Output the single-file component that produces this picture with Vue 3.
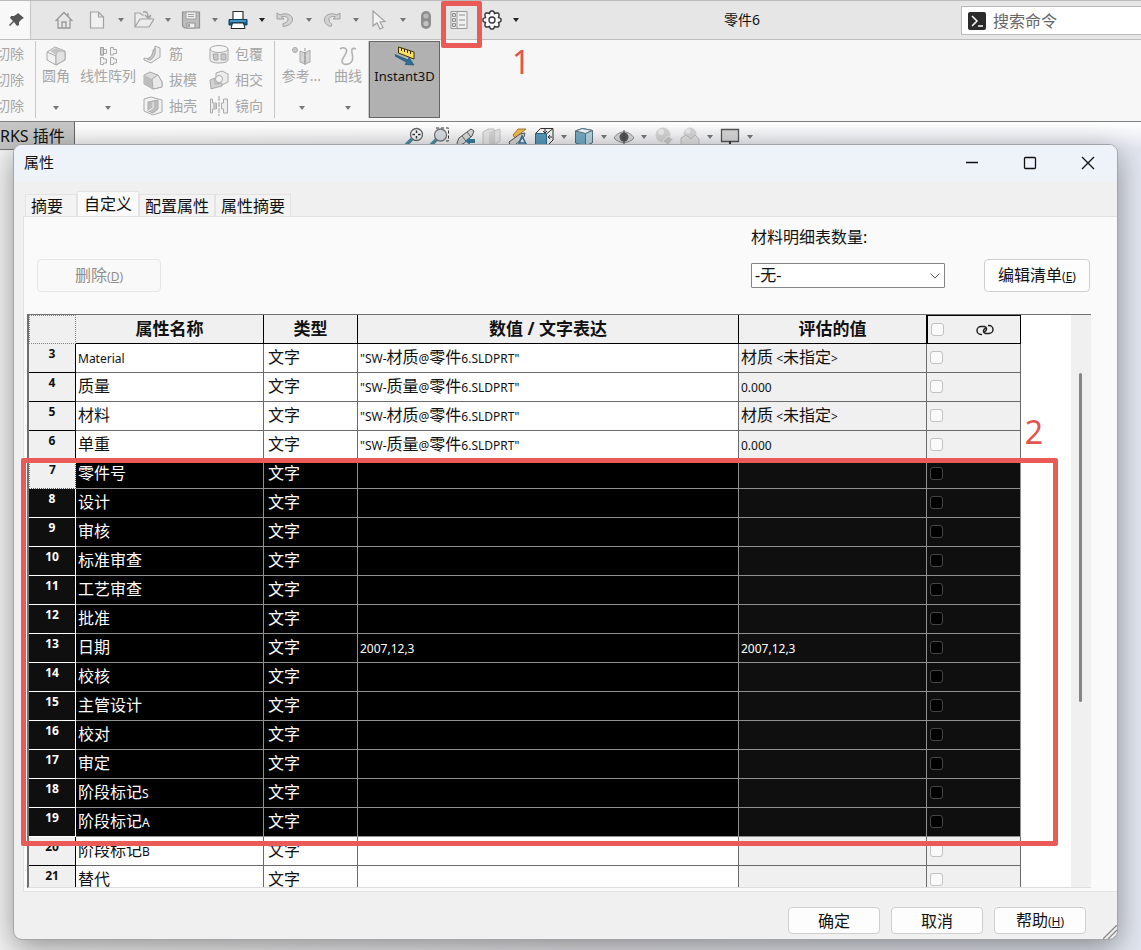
<script setup>
import { ref } from 'vue'

const quickTools = [
  { id: 'new', label: '新建' },
  { id: 'open', label: '打开' },
  { id: 'save', label: '保存' },
  { id: 'print', label: '打印', enabled: true },
  { id: 'undo', label: '撤销' },
  { id: 'redo', label: '重做' },
  { id: 'cursor', label: '选择' },
]

const featureColumns = [
  [
    { id: 'rib', label: '筋' },
    { id: 'draft', label: '拔模' },
    { id: 'shell', label: '抽壳' },
  ],
  [
    { id: 'wrap', label: '包覆' },
    { id: 'intersect', label: '相交' },
    { id: 'mirror', label: '镜向' },
  ],
]

const viewTools = [
  { id: 'zoom-fit', label: '整屏显示全图' },
  { id: 'zoom-area', label: '局部放大' },
  { id: 'prev-view', label: '上一视图' },
  { id: 'section', label: '剖面视图' },
  { id: 'annot', label: '动态注解视图' },
  { id: 'orient', label: '视图定向', menu: true },
  { id: 'display', label: '显示样式', menu: true },
  { id: 'eye', label: '隐藏/显示项目', menu: true },
  { id: 'appearance', label: '编辑外观' },
  { id: 'scene', label: '应用布景', menu: true },
  { id: 'monitor', label: '视图设定', menu: true },
]

const tabs = ['摘要', '自定义', '配置属性', '属性摘要']
const activeTab = ref('自定义')
const bomQuantity = ref('-无-')

const rows = ref([
  { no: 3, name: 'Material', value: '"SW-材质@零件6.SLDPRT"', result: '材质 <未指定>' },
  { no: 4, name: '质量', value: '"SW-质量@零件6.SLDPRT"', result: '0.000' },
  { no: 5, name: '材料', value: '"SW-材质@零件6.SLDPRT"', result: '材质 <未指定>' },
  { no: 6, name: '单重', value: '"SW-质量@零件6.SLDPRT"', result: '0.000' },
  { no: 7, name: '零件号' },
  { no: 8, name: '设计' },
  { no: 9, name: '审核' },
  { no: 10, name: '标准审查' },
  { no: 11, name: '工艺审查' },
  { no: 12, name: '批准' },
  { no: 13, name: '日期', value: '2007,12,3', result: '2007,12,3' },
  { no: 14, name: '校核' },
  { no: 15, name: '主管设计' },
  { no: 16, name: '校对' },
  { no: 17, name: '审定' },
  { no: 18, name: '阶段标记S' },
  { no: 19, name: '阶段标记A' },
  { no: 20, name: '阶段标记B' },
  { no: 21, name: '替代' },
])

const linked = ref([])

function isSelected(row) {
  return row.no >= 7 && row.no <= 19
}

// Latin runs are set smaller than the Chinese text around them
function parts(text) {
  if (!text) return []
  return text
    .split(/([\x20-\x7e]+)/)
    .filter(Boolean)
    .map((t) => ({ t, latin: /^[\x20-\x7e]/.test(t) }))
}
</script>

<template>
<svg class="sprite" aria-hidden="true">
  <symbol id="i-pin" viewBox="0 0 20 20"><path d="M11 3l6 5-2 1-3 3 0 3-2 1-3-4-4 4-1-1 4-4-3-3 1-2h3l3-2z" fill="#555" /></symbol>
  <symbol id="i-home" viewBox="0 0 20 20"><path d="M1.500 11L10 2.500l8.500 8.500M4 9.500V18h12V9.500M8 18v-6h4v6M14 3v3" fill="none" stroke="#999" stroke-width="1.300" /></symbol>
  <symbol id="i-new" viewBox="0 0 20 20"><path d="M3.500 2h8l5 5v11h-13zM11.500 2v5h5" fill="#f1f1f1" stroke="#a2a2a2" stroke-width="1.200" /></symbol>
  <symbol id="i-open" viewBox="0 0 20 20"><path d="M1 17V3h5l2 2h2M1 17L6 9h14l-5 8zM16 9V6" fill="#ececec" stroke="#a2a2a2" stroke-width="1.200" /><path d="M9 2c4-1 5 1 5 5m-3-2l3 3 3-3" fill="none" stroke="#a2a2a2" stroke-width="1.400" /></symbol>
  <symbol id="i-save" viewBox="0 0 20 20"><path d="M1.500 2h17v16h-15l-2-2z" fill="#bdbdbd" stroke="#929292" stroke-width="1.200" /><path d="M5 2h10v7H5z" fill="#f0f0f0" stroke="#a0a0a0" /><path d="M7 4.500h6M7 6.500h6" stroke="#a0a0a0" /><path d="M6 13h8v5H6z" fill="#eee" stroke="#929292" /><path d="M8 14v3" stroke="#888" stroke-width="1.500" /></symbol>
  <symbol id="i-print" viewBox="0 0 20 20"><path d="M5 9V1.500h10V9" fill="#fff" stroke="#333" stroke-width="1.200" /><path d="M1 9.500h18V15H1z" fill="#12608f" stroke="#083e62" /><path d="M2 11h16" stroke="#5ba6d0" stroke-width="1.500" /><path d="M4.500 13h11l1.500 5.500H3z" fill="#fff" stroke="#222" /></symbol>
  <symbol id="i-undo" viewBox="0 0 20 20"><path d="M2 3v6h7L6.500 7c4-1.500 7 .5 6.500 3-.5 2-2.500 3-5 3.500v3c5-.5 9-2.500 9.500-6.500C18 5 11 2 5 5z" fill="#d2d2d2" stroke="#a0a0a0" /></symbol>
  <symbol id="i-redo" viewBox="0 0 20 20"><path d="M18 3v6h-7l2.500-2c-4-1.500-7 .5-6.500 3 .5 2 1 3 3 4.500l-1 2C5 15.500 2.500 13.500 2.500 10 2 5 9 2 15 5z" fill="#d2d2d2" stroke="#a0a0a0" /></symbol>
  <symbol id="i-cursor" viewBox="0 0 20 20"><path d="M4 1v15l4-3 3 6 3-1.500-3-5.500 5-.5z" fill="#f3f3f3" stroke="#a0a0a0" stroke-width="1.200" /></symbol>
  <symbol id="i-traffic" viewBox="0 0 20 20"><rect x="5" y="1" width="10" height="18" rx="5" fill="#8f8f8f" /><circle cx="10" cy="6" r="2.600" fill="#b8b8b8" /><circle cx="10" cy="13.500" r="2.600" fill="#c4c4c4" /></symbol>
  <symbol id="i-props" viewBox="0 0 20 20"><path d="M2 1.500h16v17H2zM8 1.500v17" fill="#f0f0f0" stroke="#999" /><path d="M3.500 3.500h3v3h-3zM3.500 8.500h3v3h-3zM3.500 13.500h3v3h-3zM10 5h6M10 10h6M10 15h6" fill="#ddd" stroke="#8f8f8f" /></symbol>
  <symbol id="i-gear" viewBox="0 0 20 20"><path d="M8 2l1-1h2l1 1 .5 1.500L14 3h2l1 1v2l-.5 1.500L18 8l1 1v2l-1 1-1.500.5L17 14v2l-1 1h-2l-1.500-.5L12 18l-1 1H9l-1-1-.5-1.500L6 17H4l-1-1v-2l.5-1.500L2 12l-1-1V9l1-1 1.500-.5L3 6V4l1-1h2l1.500.5z" fill="#f8f8f8" stroke="#333" stroke-width="1.400" /><circle cx="10" cy="10" r="3" fill="#fff" stroke="#333" stroke-width="1.300" /></symbol>
  <symbol id="i-fillet" viewBox="0 0 20 20"><path d="M1 6l8-5 10 4v9l-9 5-9-5z" fill="#f2f2f2" stroke="#aaa" /><path d="M1 6l9 4v9" fill="none" stroke="#aaa" /><path d="M10 10c0-4 4-7 9-4v8l-9 5z" fill="#e2e2e2" stroke="#aaa" /><path d="M4 5l6-3 8 3c-5-1-7 1-8 4z" fill="#c4c4c4" /></symbol>
  <symbol id="i-pattern" viewBox="0 0 20 20"><path d="M2.500 1.500h3V3.500h3v4h-3v1.500h-3zM12.500 1.500h3V3.500h3v4h-3v1.500h-3zM2.500 11.500h3v1.500h3v4h-3v1.500h-3zM12.500 11.500h3v1.500h3v4h-3v1.500h-3z" fill="#f2f2f2" stroke="#a8a8a8" /><path d="M2.500 1.500h3v7.500h-3z" fill="#d0d0d0" stroke="#a0a0a0" /></symbol>
  <symbol id="i-rib" viewBox="0 0 20 20"><path d="M12 2l5 2v9l-9 6-7-3v-2l6 1c4-3 5-7 5-13z" fill="#ececec" stroke="#aaa" /><path d="M12 4c1 6-1 10-5 12l-3-1c4-2 6-5 6-9z" fill="#c5c5c5" stroke="#aaa" /></symbol>
  <symbol id="i-draft" viewBox="0 0 20 20"><path d="M1 5l6-3 8 3 4 7v5l-9 2-9-5z" fill="#dcdcdc" stroke="#aaa" /><path d="M1 5l8 4v9l-8-4z" fill="#bdbdbd" /><path d="M9 9l6-4 4 7v5l-9 2z" fill="#e9e9e9" stroke="#aaa" /></symbol>
  <symbol id="i-shell" viewBox="0 0 20 20"><path d="M1 3l7-2 11 3v12l-9 3-9-4z" fill="#f2f2f2" stroke="#aaa" /><path d="M5 6l10-2v9l-5 4-5-2z" fill="#bebebe" stroke="#aaa" /><path d="M5 15l5-3V6" fill="none" stroke="#eee" /></symbol>
  <symbol id="i-wrap" viewBox="0 0 20 20"><path d="M1 5v11c0 4 18 4 18 0V5" fill="#ededed" stroke="#aaa" /><ellipse cx="10" cy="5" rx="9" ry="3.500" fill="#f6f6f6" stroke="#aaa" /><path d="M4 10h5v6H5zM12 10h5v6h-5z" fill="#c9c9c9" stroke="#a5a5a5" /></symbol>
  <symbol id="i-intersect" viewBox="0 0 20 20"><path d="M7 3l6-2 6 3v8l-6 3-6-3z" fill="#ececec" stroke="#aaa" /><path d="M1 10l5-2v6l7-1v3l-8 2-3 1z" fill="#d2d2d2" stroke="#aaa" /><circle cx="10" cy="9" r="3.500" fill="#f4f4f4" stroke="#aaa" /></symbol>
  <symbol id="i-mirror" viewBox="0 0 20 20"><path d="M10 0v20" stroke="#999" stroke-dasharray="5 1" /><path d="M1.500 3h2v4h4v6h-4v4h-2zM18.500 3h-4v4h-2v6h2v4h4z" fill="#eee" stroke="#aaa" /><path d="M4 7.500l3-.5v6H4z" fill="#c5c5c5" /></symbol>
  <symbol id="i-ref" viewBox="0 0 20 20"><circle cx="3" cy="4" r="2.500" fill="#ccc" stroke="#aaa" /><path d="M8 5l5 2v11l-5-2zM13 7l5-3v12l-5 2z" fill="#d6d6d6" stroke="#aaa" /><path d="M13 2v17" stroke="#999" stroke-dasharray="3 1" /></symbol>
  <symbol id="i-curve" viewBox="0 0 20 20"><path d="M2 3c4-3 8 0 6 4-1 3-4 5-4 8 0 5 8 4 10 0 2-5-1-8 0-11 0-2 2-2 4-1" fill="none" stroke="#b2b2b2" stroke-width="1.600" /></symbol>
  <symbol id="i-instant" viewBox="0 0 20 20"><path d="M3.500 1l15.500 5v7L3.500 7z" fill="#ffe066" stroke="#3d3200" /><path d="M6.500 2v3M9.500 3v3M12.500 4v3M15.500 5v3" stroke="#332900" /><path d="M0 8.500l13 5.500 1-2.500 5 7.500-9-.5 1.500-2.200L0 10z" fill="#2d6d97" stroke="#174a6c" stroke-width=".6" /></symbol>
  <symbol id="i-zoom-fit" viewBox="0 0 20 20"><path d="M2 18l6-6" stroke="#4e89a8" stroke-width="3.500" /><circle cx="12.500" cy="7.500" r="6" fill="#f2f5f7" stroke="#666" stroke-width="1.300" /><path d="M12.500 3.500v2.500M12.500 9v2.500M8.500 7.500H11M14 7.500h2.500" stroke="#333" stroke-width="1.500" /></symbol>
  <symbol id="i-zoom-area" viewBox="0 0 20 20"><path d="M6 1h12.500v13H14" fill="none" stroke="#333" stroke-dasharray="3 2" /><path d="M1 18l6-6" stroke="#4e89a8" stroke-width="3.500" /><circle cx="10.500" cy="8" r="6" fill="#d5dde2" stroke="#777" stroke-width="1.300" /></symbol>
  <symbol id="i-prev-view" viewBox="0 0 20 20"><path d="M1 16l2-5L15 2l3 2-2 5-9 8-5 1z" fill="#d8d8d8" stroke="#555" /><path d="M6 9l4 5M11 5l4 5" stroke="#666" /><path d="M19 12v4h-5v2l-5-4 5-4v2z" fill="#357d9f" /></symbol>
  <symbol id="i-section" viewBox="0 0 20 20"><path d="M1 5l5-3h6v14l-5 2H1zM12 4l6-2v12l-6 4z" fill="#e4e4e4" stroke="#c2c2c2" /><path d="M7 6l5-3v13l-5 2z" fill="#d2d2d2" /></symbol>
  <symbol id="i-annot" viewBox="0 0 20 20"><path d="M5 8l5-6h8l-5 4 3 1-9 4z" fill="#f2b84b" stroke="#8c641f" stroke-width=".8" /><path d="M1 15l11-8 5-1-1 4-9 8H2z" fill="#d3d3d3" stroke="#555" /><path d="M10 19l4-10 5 10M12 16h5" fill="none" stroke="#34769b" stroke-width="1.600" /></symbol>
  <symbol id="i-orient" viewBox="0 0 20 20"><path d="M1.500 6.500l5-5H19V13l-6 6" fill="#f4f4f4" stroke="#333" /><path d="M19 1.500l-6 5" stroke="#333" /><path d="M1.500 6.500h11V19h-11z" fill="#5699b7" stroke="#2b6784" /><path d="M11 2v4M9 4l2 2 2-2M18 10h-4M16 8l-2 2 2 2" fill="none" stroke="#333" /></symbol>
  <symbol id="i-display" viewBox="0 0 20 20"><path d="M1.500 4l7-2.500 10 2v12l-7 3.500-10-3z" fill="#73aac2" stroke="#3f6e83" /><path d="M1.500 4l10 2.500 7-3-10-2z" fill="#edf3f5" stroke="#55727d" /><path d="M11.500 6.500l7-3v12l-7 3.500z" fill="#b7d1dc" stroke="#55727d" /></symbol>
  <symbol id="i-eye" viewBox="0 0 20 20"><path d="M0 11c5-8 15-8 20 0-5 6-15 6-20 0z" fill="#d3d7d9" stroke="#888" /><circle cx="10" cy="10" r="4.500" fill="#555" /><path d="M10 3v15" stroke="#444" /></symbol>
  <symbol id="i-appearance" viewBox="0 0 20 20"><circle cx="9" cy="8" r="7.500" fill="#d3d3d3" /><circle cx="7" cy="5" r="3" fill="#e9e9e9" /><path d="M9 14l5-5 5 3-5 6z" fill="#c5c5c5" stroke="#e9e9e9" /></symbol>
  <symbol id="i-scene" viewBox="0 0 20 20"><circle cx="10" cy="7" r="6.500" fill="#d3d3d3" /><path d="M1 11l5-3 5 4 4-4 4 4v7H1z" fill="#dedede" stroke="#bbb" /><circle cx="8" cy="4" r="2.500" fill="#eaeaea" /></symbol>
  <symbol id="i-monitor" viewBox="0 0 20 20"><path d="M1.500 2.500h17v12h-17z" fill="#d5d5d5" stroke="#555" stroke-width="1.300" /><path d="M10 14v4M6 18.500h8" stroke="#333" stroke-width="2" /></symbol>
</svg>

<div class="app">
  <header class="quickbar">
    <button class="pin" aria-label="固定"><svg class="icon"><use href="#i-pin" /></svg></button>
    <div class="tools">
      <button class="tool" aria-label="主页"><svg class="icon"><use href="#i-home" /></svg></button>
      <div class="tool-groups">
        <div v-for="tool in quickTools" :key="tool.id" class="tool-group">
          <button class="tool" :aria-label="tool.label"><svg class="icon"><use :href="'#i-' + tool.id" /></svg></button>
          <button class="caret" :class="{ dark: tool.enabled }" :aria-label="tool.label + '选项'"></button>
        </div>
        <button class="tool" aria-label="重建模型"><svg class="icon"><use href="#i-traffic" /></svg></button>
      </div>
      <div class="marked">
        <button class="tool" aria-label="文件属性"><svg class="icon"><use href="#i-props" /></svg></button>
        <span class="mark mark-tool"></span>
        <span class="mark-no mark-no-tool">1</span>
      </div>
      <div class="tool-group">
        <button class="tool" aria-label="选项"><svg class="icon"><use href="#i-gear" /></svg></button>
        <button class="caret dark" aria-label="更多选项"></button>
      </div>
    </div>
    <h1 class="doc-title">零件6</h1>
    <label class="search">
      <svg class="search-icon" viewBox="0 0 18 18"><rect width="18" height="18" rx="2" fill="#2b2b2b" /><path d="M4 4l5 5-5 5M10 14h5" fill="none" stroke="#fff" stroke-width="1.500" /></svg>
      <input type="text" placeholder="搜索命令" aria-label="搜索命令">
    </label>
  </header>

  <nav class="ribbon">
    <div class="cut-list">
      <button v-for="n in 3" :key="n" class="feature">切除</button>
    </div>
    <button class="big big-s"><svg class="icon"><use href="#i-fillet" /></svg><span>圆角</span><i class="arrow"></i></button>
    <button class="big big-l"><svg class="icon"><use href="#i-pattern" /></svg><span>线性阵列</span><i class="arrow"></i></button>
    <div v-for="(col, i) in featureColumns" :key="i" class="feature-col">
      <button v-for="f in col" :key="f.id" class="feature"><svg class="icon"><use :href="'#i-' + f.id" /></svg>{{ f.label }}</button>
    </div>
    <div class="ribbon-group">
      <button class="big big-m"><svg class="icon"><use href="#i-ref" /></svg><span>参考...</span><i class="arrow"></i></button>
      <button class="big big-s"><svg class="icon"><use href="#i-curve" /></svg><span>曲线</span><i class="arrow"></i></button>
    </div>
    <button class="big instant"><svg class="icon"><use href="#i-instant" /></svg><span>Instant3D</span></button>
  </nav>

  <div class="viewbar">
    <button class="addin-tab">RKS 插件</button>
    <div class="view-tools">
      <template v-for="v in viewTools" :key="v.id">
        <button class="view-tool" :aria-label="v.label"><svg class="icon"><use :href="'#i-' + v.id" /></svg></button>
        <button v-if="v.menu" class="caret view-caret" :aria-label="v.label + '选项'"></button>
      </template>
    </div>
  </div>

  <section class="dialog" role="dialog" aria-labelledby="dlg-title">
    <div class="titlebar">
      <h2 id="dlg-title">属性</h2>
      <div class="win-buttons">
        <button aria-label="最小化"><svg viewBox="0 0 14 14"><path d="M1 6.500h12" /></svg></button>
        <button aria-label="最大化"><svg viewBox="0 0 14 14"><rect x="1.500" y="1.500" width="11" height="11" rx="1" /></svg></button>
        <button aria-label="关闭"><svg viewBox="0 0 14 14"><path d="M1 1l12 12M13 1L1 13" /></svg></button>
      </div>
    </div>

    <div class="tabs" role="tablist">
      <button
        v-for="tab in tabs" :key="tab" role="tab" class="tab"
        :class="{ active: tab === activeTab }" :aria-selected="tab === activeTab"
        @click="activeTab = tab"
      >{{ tab }}</button>
    </div>

    <div class="panel">
      <div class="controls">
        <button class="btn btn-delete" disabled>删除<small>(<u>D</u>)</small></button>
        <div class="field">
          <label for="bom">材料明细表数量:</label>
          <div class="select-box">
            <select id="bom" v-model="bomQuantity">
              <option>-无-</option>
            </select>
            <svg class="chevron" viewBox="0 0 10 6"><path d="M.5 .5L5 5 9.500 .5" fill="none" stroke="#555" /></svg>
          </div>
        </div>
        <button class="btn btn-edit">编辑清单<small>(<u>E</u>)</small></button>
      </div>

      <div class="grid">
        <div class="grid-view">
          <table>
            <colgroup>
              <col class="c-no"><col class="c-name"><col class="c-type"><col><col class="c-name"><col class="c-type">
            </colgroup>
            <thead>
              <tr>
                <th class="corner"></th>
                <th>属性名称</th>
                <th>类型</th>
                <th>数值 / 文字表达</th>
                <th>评估的值</th>
                <th class="link-head">
                  <div class="link-cell">
                    <input type="checkbox" aria-label="全部链接">
                    <svg class="link-icon" viewBox="0 0 18 12"><path d="M6 10.500H5a4 4 0 0 1 0-8h3.500a2.500 2.500 0 0 1 1.500 4L8.500 8M12 1.500h1a4 4 0 0 1 0 8H9.500a2.500 2.500 0 0 1-1.500-4L9.500 4" fill="none" stroke="#222" stroke-width="1.500" /></svg>
                  </div>
                </th>
              </tr>
            </thead>
            <tbody>
              <tr v-for="row in rows" :key="row.no" :class="{ selected: isSelected(row), current: row.no === 7 }">
                <th scope="row">{{ row.no }}</th>
                <td><span v-for="(p, i) in parts(row.name)" :key="i" :class="{ latin: p.latin }">{{ p.t }}</span></td>
                <td class="type">文字</td>
                <td><span v-for="(p, i) in parts(row.value)" :key="i" :class="{ latin: p.latin }">{{ p.t }}</span></td>
                <td class="readonly"><span v-for="(p, i) in parts(row.result)" :key="i" :class="{ latin: p.latin }">{{ p.t }}</span></td>
                <td class="readonly">
                  <div class="link-cell"><input v-model="linked" type="checkbox" :value="row.no" :aria-label="'链接 ' + row.name"></div>
                </td>
              </tr>
            </tbody>
          </table>
          <div class="scrollbar"><div class="thumb"></div></div>
        </div>
        <div class="mark mark-rows"><span class="mark-no mark-no-rows">2</span></div>
      </div>
    </div>

    <footer class="actions">
      <button class="btn">确定</button>
      <button class="btn">取消</button>
      <button class="btn">帮助<small>(<u>H</u>)</small></button>
      <svg class="grip" viewBox="0 0 14 14"><path d="M0 14L14 0M5 14l9-9M10 14l4-4" stroke="#888" stroke-width="1.300" /></svg>
    </footer>
  </section>
</div>
</template>

<style>
body {
  margin: 0;
  overflow: hidden;
}
</style>

<style scoped>
.app {
  position: relative;
  height: 100vh;
  overflow: hidden;
  background: linear-gradient(90deg, #f4f4f4, #e6e6ea 50%, #e2e6f0);
  font-family: "Noto Sans", "Noto Sans CJK SC", sans-serif;
  font-size: 16px;
  color: #111;
}

.app *,
.app *::before {
  box-sizing: border-box;
}

.sprite {
  position: absolute;
  width: 0;
  height: 0;
}

button,
input,
select {
  margin: 0;
  padding: 0;
  border: 0;
  background: none;
  font: inherit;
  color: inherit;
}

.icon {
  display: block;
  flex: none;
  width: 20px;
  height: 20px;
}

/* Quick access bar */
.quickbar {
  display: flex;
  height: 40px;
  border-top: 1px solid #bbb;
  border-bottom: 1px solid #bdbdbd;
  background: #e6e6e6;
}

.pin {
  width: 31px;
  padding-left: 7px;
  border-right: 1px solid #c4c4c4;
  background: #f8f8f8;
}

.tools {
  display: flex;
  gap: 9px;
  align-items: center;
  padding-left: 21px;
}

.tool-groups,
.tool-group {
  display: flex;
  align-items: center;
}

.tool {
  display: flex;
  justify-content: center;
  width: 24px;
}

.tool .icon {
  width: 20px;
  height: 20px;
}

.caret {
  display: flex;
  justify-content: center;
  width: 23px;
  color: #777;
}

.caret::before,
.arrow {
  content: "";
  width: 0;
  border: 3px solid transparent;
  border-top: 4px solid currentColor;
  border-bottom: 0;
}

.caret.dark {
  color: #222;
}

.marked {
  position: relative;
}

.doc-title {
  flex: 1;
  margin: 0;
  padding-right: 4px;
  font-size: 14px;
  font-weight: 400;
  line-height: 38px;
  text-align: center;
}

.search {
  display: flex;
  gap: 7px;
  align-items: center;
  width: 180px;
  height: 29px;
  margin-top: 5px;
  padding-left: 6px;
  border: 1px solid #bbb;
  border-right: 0;
  background: #fff;
}

.search-icon {
  flex: none;
  width: 18px;
  height: 18px;
}

.search input {
  min-width: 0;
  outline: none;
}

.search input::placeholder {
  color: #666;
  opacity: 1;
}

/* Feature ribbon */
.ribbon {
  display: flex;
  height: 82px;
  padding: 1px 0 3px;
  border-bottom: 1px solid #808080;
  background: #f7f7f7;
  color: #a6a6a6;
  font-size: 14px;
}

.cut-list {
  display: flex;
  flex-direction: column;
  align-items: flex-end;
  width: 36px;
  padding-right: 11px;
  border-right: 1px solid #c8c8c8;
  overflow: hidden;
}

.feature {
  display: flex;
  flex: none;
  gap: 6px;
  align-items: center;
  height: 26px;
  line-height: 26px;
  white-space: nowrap;
}

.feature-col {
  width: 66px;
  padding-left: 3px;
}

.big {
  display: flex;
  flex: none;
  flex-direction: column;
  align-items: center;
  padding-top: 5px;
  line-height: 20px;
  white-space: nowrap;
}

.big .arrow {
  margin-top: 20px;
  color: #777;
}

.big-s {
  width: 40px;
}

.big-m {
  width: 53px;
}

.big-l {
  width: 64px;
}

.ribbon-group {
  display: flex;
  margin-left: 2px;
  border-left: 1px solid #c8c8c8;
  border-right: 1px solid #c8c8c8;
}

.instant {
  width: 71px;
  padding-top: 4px;
  border: 1px solid #666;
  background: #b1b1b1;
  color: #111;
  font-size: 13px;
}

/* Heads-up view toolbar */
.viewbar {
  display: flex;
  align-items: flex-start;
  height: 28px;
  background: linear-gradient(180deg, #fff, rgba(255, 255, 255, 0));
}

.addin-tab {
  width: 75px;
  height: 28px;
  border-right: 1px solid #666;
  border-bottom: 1px solid #777;
  background: #c6c6c6;
  line-height: 24px;
  text-align: left;
  white-space: nowrap;
}

.view-tools {
  display: flex;
  margin-left: 326px;
  padding-top: 5px;
}

.view-tool {
  display: flex;
  justify-content: center;
  width: 26px;
}

.view-caret {
  width: 14px;
  padding-top: 8px;
}

/* Dialog */
.dialog {
  position: absolute;
  top: 144px;
  right: 23px;
  bottom: 10px;
  left: 13px;
  display: flex;
  flex-direction: column;
  border: 1px solid #a5a5a8;
  border-radius: 9px;
  background: #f0f0f0;
  box-shadow: 0 8px 30px rgba(0, 0, 0, 0.4);
  overflow: hidden;
}

.titlebar {
  display: flex;
  justify-content: space-between;
  height: 36px;
  padding-left: 10px;
  background: #eef3fa;
}

.titlebar h2 {
  margin: 0;
  font-size: 15px;
  font-weight: 400;
  line-height: 34px;
}

.win-buttons {
  display: flex;
}

.win-buttons button {
  display: flex;
  align-items: center;
  justify-content: center;
  width: 58px;
  height: 36px;
}

.win-buttons svg {
  width: 14px;
  height: 14px;
  fill: none;
  stroke: #111;
  stroke-width: 1.3;
}

.tabs {
  display: flex;
  align-items: flex-end;
  height: 35px;
  padding-left: 11px;
}

.tab {
  height: 22px;
  padding: 0 5px;
  border: 1px solid #e3e3e3;
  border-bottom: 0;
  background: #f3f3f3;
  line-height: 20px;
}

.tab:first-child {
  padding-right: 13px;
}

.tab.active {
  height: 25px;
  padding: 0 6px;
  background: #fafafa;
}

.panel {
  display: flex;
  flex: 1;
  flex-direction: column;
  min-height: 0;
  margin-left: 9px;
  padding: 10px 26px 3px 3px;
  border: 1px solid #e2e2e2;
  border-right: 0;
  background: #fafafa;
}

.controls {
  display: flex;
  align-items: flex-end;
  padding: 0 1px 0 10px;
  margin-bottom: 22px;
}

.btn {
  width: 92px;
  height: 27px;
  border: 1px solid #cfcfcf;
  border-radius: 4px;
  background: #fdfdfd;
  line-height: 24px;
}

.btn small {
  font-size: 12px;
}

.btn-delete {
  width: 124px;
  height: 33px;
  border-color: #e6e6e6;
  background: #f9f9f9;
  color: #8e8e8e;
}

.btn-edit {
  width: 106px;
  height: 33px;
}

.field {
  display: flex;
  flex-direction: column;
  gap: 16px;
  margin: 0 39px 4px auto;
  line-height: 20px;
}

.select-box {
  position: relative;
}

.select-box select {
  display: block;
  width: 194px;
  height: 25px;
  padding: 0 0 2px 3px;
  border: 1px solid #858585;
  border-radius: 1px;
  background: #fff;
  appearance: none;
}

.chevron {
  position: absolute;
  top: 10px;
  right: 5px;
  width: 10px;
  height: 6px;
}

/* Property table */
.grid {
  position: relative;
  flex: 1;
  min-height: 0;
}

.grid-view {
  display: flex;
  height: 100%;
  border-top: 1px solid #707070;
  border-left: 2px solid #707070;
  border-bottom: 1px solid #ddd;
  background: #fff;
  overflow: hidden;
}

table {
  flex: 1;
  align-self: flex-start;
  width: 0;
  margin-right: 50px;
  border-spacing: 0;
  table-layout: fixed;
}

.c-no {
  width: 47px;
}

.c-name {
  width: 188px;
}

.c-type {
  width: 94px;
}

th,
td {
  height: 29px;
  padding: 0 2px;
  border-right: 1px solid #6a6a6a;
  border-bottom: 1px solid #6a6a6a;
  line-height: 27px;
  text-align: left;
  vertical-align: top;
  white-space: nowrap;
}

thead th {
  border-color: #000;
  background: #f0f0f0;
  font-size: 17px;
  text-align: center;
}

thead .corner {
  border: 1px dotted #c66;
  border-top-color: #4aa;
  border-left-color: #4aa;
}

thead .link-head {
  border-top: 1px solid #000;
  border-left: 1px solid #000;
}

tbody th {
  border-color: #000;
  background: #f0f0f0;
  font-size: 12px;
  line-height: 20px;
  text-align: center;
}

.type {
  padding-left: 4px;
}

.latin {
  font-size: 12px;
}

.readonly {
  background: #f0f0f0;
}

.link-cell {
  display: flex;
  align-items: center;
  height: 27px;
}

.link-cell input {
  flex: none;
  width: 13px;
  height: 13px;
  margin-left: 1px;
  border: 1px solid #c2c2c2;
  border-radius: 3px;
  background: #fafafa;
  appearance: none;
}

.link-icon {
  width: 18px;
  height: 12px;
  margin-left: 32px;
}

.selected td {
  border-color: #909090;
  background: #000;
  color: #fff;
}

.selected .readonly,
.selected th {
  background: #0f0f0f;
}

.selected th {
  border-color: #fff;
  color: #fff;
}

.selected input {
  border-color: #444;
  background: #000;
}

.current th {
  border-style: dotted;
  border-color: #a33;
  border-width: 0 1px 1px;
  border-left-color: #4aa;
  background: #f0f0f0;
  color: #111;
}

.scrollbar {
  width: 20px;
  padding: 58px 9px 0 8px;
  background: #f0f0f0;
}

.thumb {
  height: 64%;
  border-radius: 2px;
  background: #858585;
}

/* Callouts */
.mark {
  position: absolute;
  border: 5px solid #ea5a56;
  border-radius: 2px;
  pointer-events: none;
}

.mark-no {
  position: absolute;
  color: #e4544f;
  font-size: 32px;
  line-height: 32px;
}

.mark-tool {
  top: -9px;
  left: -6px;
  width: 41px;
  height: 47px;
}

.mark-no-tool {
  top: 36px;
  left: 65px;
}

.mark-rows {
  top: 144px;
  right: 33px;
  left: -6px;
  height: 388px;
}

.mark-no-rows {
  top: -47px;
  right: 10px;
}

.actions {
  position: relative;
  display: flex;
  flex: none;
  gap: 11px;
  justify-content: flex-end;
  padding: 15px 31px 5px;
}

.grip {
  position: absolute;
  right: 0;
  bottom: 0;
  width: 14px;
  height: 14px;
}
</style>
